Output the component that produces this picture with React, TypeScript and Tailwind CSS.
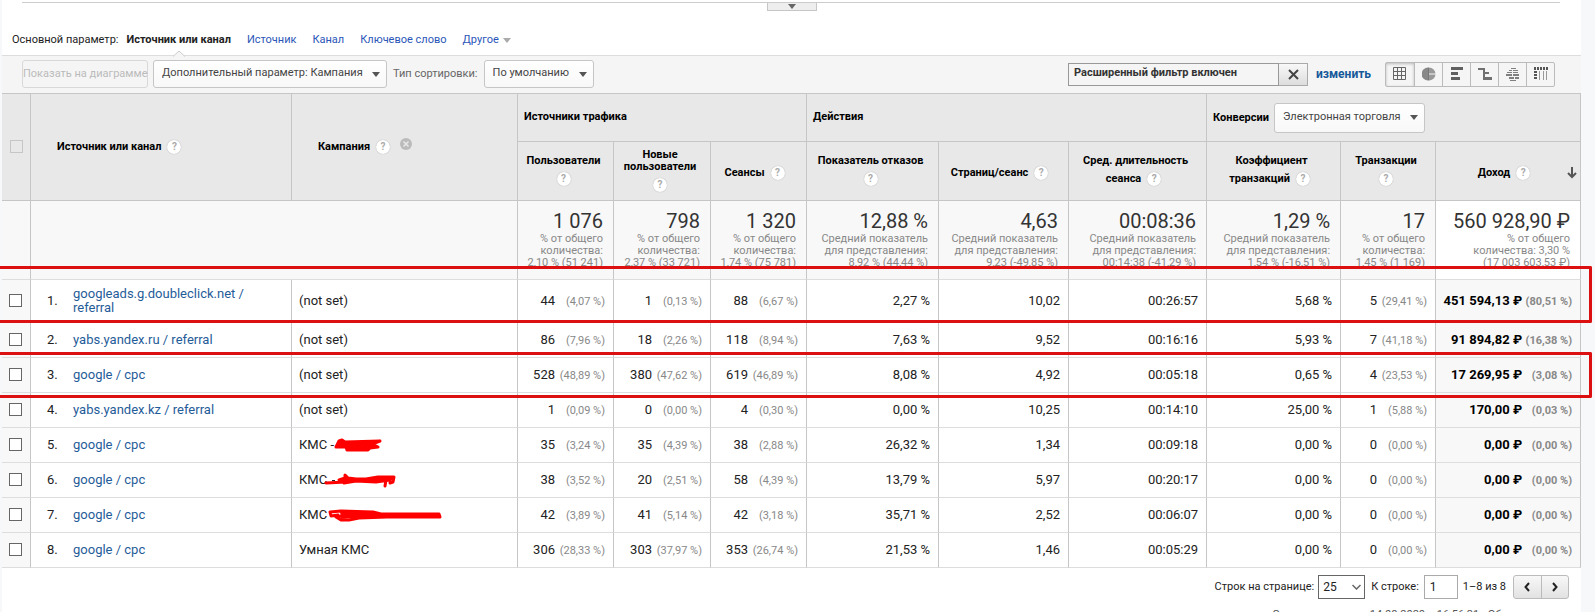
import React from 'react';
import { clsx } from 'clsx';

interface Metric {
  value: string;
  share?: string;
}

interface Row {
  source: string;
  campaign: string;
  scribble?: React.ReactNode;
  metrics: Metric[];
}

interface Column {
  label: string[];
  total: string;
  note: string[];
  helpBelow?: boolean;
}

const columns: Column[] = [
  { label: ['Пользователи'], helpBelow: true, total: '1 076', note: ['% от общего', 'количества:', '2,10 % (51 241)'] },
  { label: ['Новые', 'пользователи'], helpBelow: true, total: '798', note: ['% от общего', 'количества:', '2,37 % (33 721)'] },
  { label: ['Сеансы'], total: '1 320', note: ['% от общего', 'количества:', '1,74 % (75 781)'] },
  { label: ['Показатель отказов'], helpBelow: true, total: '12,88 %', note: ['Средний показатель', 'для представления:', '8,92 % (44,44 %)'] },
  { label: ['Страниц/сеанс'], total: '4,63', note: ['Средний показатель', 'для представления:', '9,23 (-49,85 %)'] },
  { label: ['Сред. длительность', 'сеанса'], total: '00:08:36', note: ['Средний показатель', 'для представления:', '00:14:38 (-41,29 %)'] },
  { label: ['Коэффициент', 'транзакций'], total: '1,29 %', note: ['Средний показатель', 'для представления:', '1,54 % (-16,51 %)'] },
  { label: ['Транзакции'], helpBelow: true, total: '17', note: ['% от общего', 'количества:', '1,45 % (1 169)'] },
  { label: ['Доход'], total: '560 928,90 ₽', note: ['% от общего', 'количества: 3,30 %', '(17 003 603,53 ₽)'] },
];

// "44|4,07" -> value with a share, "2,27 %" -> plain value
const parse = (cells: string[]): Metric[] =>
  cells.map((cell) => {
    const [value, share] = cell.split('|');
    return { value, share };
  });

const rows: Row[] = [
  { source: 'googleads.g.doubleclick.net / referral', campaign: '(not set)', metrics: parse(['44|4,07', '1|0,13', '88|6,67', '2,27 %', '10,02', '00:26:57', '5,68 %', '5|29,41', '451 594,13 ₽|80,51']) },
  { source: 'yabs.yandex.ru / referral', campaign: '(not set)', metrics: parse(['86|7,96', '18|2,26', '118|8,94', '7,63 %', '9,52', '00:16:16', '5,93 %', '7|41,18', '91 894,82 ₽|16,38']) },
  { source: 'google / cpc', campaign: '(not set)', metrics: parse(['528|48,89', '380|47,62', '619|46,89', '8,08 %', '4,92', '00:05:18', '0,65 %', '4|23,53', '17 269,95 ₽|3,08']) },
  { source: 'yabs.yandex.kz / referral', campaign: '(not set)', metrics: parse(['1|0,09', '0|0,00', '4|0,30', '0,00 %', '10,25', '00:14:10', '25,00 %', '1|5,88', '170,00 ₽|0,03']) },
  {
    source: 'google / cpc',
    campaign: 'КМС -',
    scribble: (
      <svg width="48" height="16" viewBox="0 0 48 16" className="shrink-0" aria-hidden="true">
        <path d="M2 11L3 8L5 4L8 3L11 5L42 5L40 8L44 10L36 11L34 13L13 13L12 11z" fill="#ff0000" />
        <path d="M2 10L5 4L8 3L11 5L46 4L38 7L44 10L36 11L34 13L13 13L12 10z" fill="none" stroke="#ff0000" strokeWidth="3" strokeLinecap="round" strokeLinejoin="round" />
      </svg>
    ),
    metrics: parse(['35|3,24', '35|4,39', '38|2,88', '26,32 %', '1,34', '00:09:18', '0,00 %', '0|0,00', '0,00 ₽|0,00']),
  },
  {
    source: 'google / cpc',
    campaign: 'КМС',
    scribble: (
      <svg width="74" height="16" viewBox="0 0 74 16" className="-ml-[3px] shrink-0" aria-hidden="true">
        <path d="M8 8.500h3" stroke="#222" />
        <path d="M15 9L20 6L36 7L54 5L56 8L50 9L32 9L20 12z" fill="#ff0000" />
        <path d="M2 11L22 10M15 8L21 6L21 3L24 6L32 7L42 7L54 5L70 5L69 10L66 11M20 11L32 9L52 10L66 8M62 8L61 14M52 7L68 7M36 9L56 8" fill="none" stroke="#ff0000" strokeWidth="3" strokeLinecap="round" strokeLinejoin="round" />
      </svg>
    ),
    metrics: parse(['38|3,52', '20|2,51', '58|4,39', '13,79 %', '5,97', '00:20:17', '0,00 %', '0|0,00', '0,00 ₽|0,00']),
  },
  {
    source: 'google / cpc',
    campaign: 'КМС',
    scribble: (
      <svg width="116" height="16" viewBox="0 0 116 16" className="shrink-0" aria-hidden="true">
        <path d="M13 4L46 5L56 8L112 7L113 10L30 11L14 12z" fill="#ff0000" />
        <path d="M11 8L4 9L3 5L14 4L46 5L54 7L112 7L113 10L60 10L32 11L22 13L14 13L9 10L22 8" fill="none" stroke="#ff0000" strokeWidth="3" strokeLinecap="round" strokeLinejoin="round" />
      </svg>
    ),
    metrics: parse(['42|3,89', '41|5,14', '42|3,18', '35,71 %', '2,52', '00:06:07', '0,00 %', '0|0,00', '0,00 ₽|0,00']),
  },
  { source: 'google / cpc', campaign: 'Умная КМС', metrics: parse(['306|28,33', '303|37,97', '353|26,74', '21,53 %', '1,46', '00:05:29', '0,00 %', '0|0,00', '0,00 ₽|0,00']) },
];

const viewIcons = [
  {
    name: 'Таблица',
    icon: <path d="M0.500 0.500h12v12h-12zM4.500 0.500v12M8.500 0.500v12M0.500 4.500h12M0.500 8.500h12" fill="none" stroke="#666" />,
  },
  {
    name: 'Проценты',
    icon: (
      <>
        <path d="M6 0.500A6.500 6.500 0 0 0 6 13.500z" fill="#888" />
        <path d="M7 0.500A6.500 6.500 0 0 1 13.500 6.500H7zM7 7.500h6.500A6.500 6.500 0 0 1 7 13.500z" fill="#999" />
        <path d="M6.500 0.500v13" stroke="#777" />
      </>
    ),
  },
  {
    name: 'Эффективность',
    icon: <path d="M1 0h12v3H1zM1 5h7v3H1zM1 10h9v3H1z" fill="#606060" />,
  },
  {
    name: 'Сравнение',
    icon: <path d="M0 1h7v2H0zM5 1h2v12H5zM5 5h6v2H5zM6 10h8v3H6z" fill="#707070" />,
  },
  {
    name: 'Облако терминов',
    icon: <path d="M5 1h5v1H5zM3 3h3v1H3zM7 3h5v1H7zM1 5h5v1H1zM7 5h5v1H7zM0 7h6v2H0zM7 7h6v2H7zM3 10h5v2H3zM9 10h4v2H9zM4 13h6v1H4z" fill="#808080" />,
  },
  {
    name: 'Сводка',
    icon: (
      <>
        <path d="M0 1.500h14" stroke="#555" strokeWidth="3" strokeDasharray="2 1" />
        <path d="M1.500 4v9" stroke="#555" strokeWidth="3" strokeDasharray="2 1" />
        <path d="M5.500 4v9M9.500 4v9M12.500 4v9" stroke="#999" />
      </>
    ),
  },
];

function Arrow({ className }: { className?: string }) {
  return (
    <svg width="8" height="5" viewBox="0 0 8 5" className={clsx('shrink-0', className)} aria-hidden="true">
      <path d="M0 0h8L4 5z" fill="currentColor" />
    </svg>
  );
}

function Help() {
  return (
    <button
      type="button"
      aria-label="Справка"
      className="inline-flex size-[14px] shrink-0 items-center justify-center rounded-full bg-white text-[10px] leading-none font-bold text-[#aaa] shadow-[0_0_1px_#999]"
    >
      ?
    </button>
  );
}

function Dropdown({ label, className }: { label: string; className: string }) {
  return (
    <span className={clsx('relative inline-flex items-center', className)}>
      <select
        aria-label={label}
        className="h-full w-full appearance-none rounded-[3px] border border-[#c6c6c6] bg-linear-to-b from-white to-[#f8f8f8] pb-px pl-2 text-[11px] font-normal text-[#444]"
      >
        <option>{label}</option>
      </select>
      <Arrow className="pointer-events-none absolute right-[7px] text-[#555]" />
    </span>
  );
}

function PrimaryDimension() {
  return (
    <nav className="flex h-[29px] items-center gap-4 pb-px pl-[10px] text-[11px] text-[#222]">
      <span className="flex gap-2">
        Основной параметр:
        <b className="relative font-bold">
          Источник или канал
          <svg width="12" height="7" viewBox="0 0 12 7" className="absolute top-[18px] left-1/2 -ml-[6px]" aria-hidden="true">
            <path d="M0 6.500L6 1l6 5.500" fill="#f5f5f5" stroke="#ccc" />
          </svg>
        </b>
      </span>
      <a href="#source" className="text-[#2a56b8]">Источник</a>
      <a href="#medium" className="text-[#2a56b8]">Канал</a>
      <a href="#keyword" className="text-[#2a56b8]">Ключевое слово</a>
      <a href="#other" className="flex items-center gap-1 text-[#2a56b8]">
        Другое
        <Arrow className="text-[#aaa]" />
      </a>
    </nav>
  );
}

function Toolbar() {
  return (
    <div className="flex h-[38px] items-center border-t border-[#ddd] bg-[#f5f5f5] pr-[26px] pb-px pl-5 text-[11px]">
      <button type="button" disabled className="h-7 w-[126px] rounded-[3px] border border-[#d8d8d8] text-center whitespace-nowrap text-[#bbb]">
        Показать на диаграмме
      </button>
      <Dropdown label="Дополнительный параметр: Кампания" className="ml-[5px] h-7 w-[234px]" />
      <span className="ml-[6px] text-[#666]">Тип сортировки:</span>
      <Dropdown label="По умолчанию" className="ml-[6px] h-7 w-[110px]" />

      <div className="ml-auto flex h-[23px]">
        <input
          type="text"
          aria-label="Фильтр"
          defaultValue="Расширенный фильтр включен"
          className="w-[211px] border border-[#999] bg-[#f5f5f5] px-[5px] pb-[2px] text-[11px] font-bold text-[#333]"
        />
        <button type="button" aria-label="Очистить фильтр" className="flex w-[29px] items-center justify-center border border-l-0 border-[#aaa] bg-linear-to-b from-[#f8f8f8] to-[#ddd]">
          <svg width="11" height="11" viewBox="0 0 11 11" aria-hidden="true">
            <path d="M1 1l9 9M10 1l-9 9" stroke="#444" strokeWidth="2" />
          </svg>
        </button>
      </div>
      <a href="#edit" className="ml-2 text-[12px] font-bold text-[#15599a]">изменить</a>
      <div className="ml-[14px] flex h-[25px] rounded-[2px] border border-[#bbb]">
        {viewIcons.map((view, i) => (
          <button
            key={view.name}
            type="button"
            aria-label={view.name}
            className={clsx(
              'flex w-7 items-center justify-center',
              i > 0 && 'border-l border-[#bbb]',
              i === 0 && 'shadow-[inset_0_1px_3px_#bbb]'
            )}
          >
            <svg width="14" height="14" viewBox="0 0 14 14" aria-hidden="true">{view.icon}</svg>
          </button>
        ))}
      </div>
    </div>
  );
}

function ColumnHead({ column, sorted }: { column: Column; sorted: boolean }) {
  const above = column.helpBelow ? column.label : column.label.slice(0, -1);
  const last = column.helpBelow ? null : column.label[column.label.length - 1];
  return (
    <th scope="col" className="relative h-[59px] border-r border-b border-[#c6c6c6] pt-1 pr-1">
      {above.map((line) => (
        <div key={line} className="whitespace-nowrap">{line}</div>
      ))}
      <div className={clsx('flex h-6 items-center justify-center gap-[6px]', last && 'pr-1')}>
        {last}
        <Help />
      </div>
      {sorted && (
        <svg width="10" height="12" viewBox="0 0 10 12" className="absolute top-[25px] right-[3px]" aria-hidden="true">
          <path d="M5 0v10M1 6l4 4 4-4" fill="none" stroke="#555" strokeWidth="2" />
        </svg>
      )}
    </th>
  );
}

function ReportTable() {
  const border = 'border-r border-b border-[#c6c6c6]';
  return (
    <table className="w-full table-fixed border-separate border-spacing-0 border-t border-[#c6c6c6]">
      <colgroup>
        <col className="w-[29px]" />
        <col className="w-[261px]" />
        <col className="w-[226px]" />
        <col className="w-[96px]" />
        <col className="w-[97px]" />
        <col className="w-[96px]" />
        <col className="w-[132px]" />
        <col className="w-[130px]" />
        <col className="w-[138px]" />
        <col className="w-[134px]" />
        <col className="w-[95px]" />
        <col className="w-[145px]" />
      </colgroup>
      <thead className="bg-[#e8e8e8] text-[11px] leading-[12px] text-black">
        <tr>
          <th rowSpan={2} className={border}>
            <input type="checkbox" aria-label="Выбрать все" className="mb-px ml-2 block size-[13px] appearance-none border border-[#c6c6c6]" />
          </th>
          <th rowSpan={2} scope="col" className={clsx(border, 'pl-[26px]')}>
            <span className="flex items-center gap-[6px]">Источник или канал <Help /></span>
          </th>
          <th rowSpan={2} scope="col" className={clsx(border, 'pl-[26px]')}>
            <span className="flex items-center gap-[6px]">
              Кампания <Help />
              <button type="button" aria-label="Удалить" className="mb-[6px] ml-1">
                <svg width="12" height="12" viewBox="0 0 12 12" aria-hidden="true">
                  <circle cx="6" cy="6" r="6" fill="#bbb" />
                  <path d="M3.500 3.500l5 5M8.500 3.500l-5 5" stroke="#e8e8e8" strokeWidth="1.500" />
                </svg>
              </button>
            </span>
          </th>
          <th colSpan={3} scope="colgroup" className={clsx(border, 'h-12 pb-[2px] pl-[6px] text-left')}>Источники трафика</th>
          <th colSpan={3} scope="colgroup" className={clsx(border, 'pb-[2px] pl-[6px] text-left')}>Действия</th>
          <th colSpan={3} scope="colgroup" className={clsx(border, 'pl-[6px] text-left')}>
            <span className="flex items-center gap-[5px]">
              Конверсии
              <Dropdown label="Электронная торговля" className="h-[30px] w-[151px]" />
            </span>
          </th>
        </tr>
        <tr>
          {columns.map((column, i) => (
            <ColumnHead key={column.total} column={column} sorted={i === columns.length - 1} />
          ))}
        </tr>
      </thead>
      <tbody className="text-[13px] leading-[14px] text-[#222]">
        <tr className="bg-[#f8f8f8] align-top">
          <td className="h-[79px] border-r border-b border-r-[#c6c6c6] border-b-[#ddd]" />
          <td colSpan={2} className="border-r border-b border-r-[#c6c6c6] border-b-[#ddd]" />
          {columns.map((column, i) => (
            <td
              key={column.total}
              className={clsx(
                'border-r border-b border-r-[#c6c6c6] border-b-[#ddd] pt-2 pr-[10px] text-right whitespace-nowrap',
                i === columns.length - 1 && 'bg-white'
              )}
            >
              <div className="text-[20px] leading-[24px] text-[#333]">{column.total}</div>
              <div className="text-[11px] leading-[12px] text-[#888]">
                {column.note.map((line) => <div key={line}>{line}</div>)}
              </div>
            </td>
          ))}
        </tr>
        {rows.map((row, i) => (
          <tr key={i}>
            <td className={clsx('border-r border-b border-r-[#c6c6c6] border-b-[#ddd] bg-[#f8f8f8]', i === 0 ? 'h-[43px]' : 'h-[35px]')}>
              <input type="checkbox" aria-label={row.source} className="mb-[2px] ml-[7px] block size-[13px] appearance-none border border-[#666] bg-white" />
            </td>
            <td className="border-r border-b border-r-[#c6c6c6] border-b-[#ddd] pr-2">
              <div className="flex items-center">
                <span className="w-[42px] shrink-0 pl-4">{i + 1}.</span>
                <a href="#row" className="text-[#1f5c99]">{row.source}</a>
              </div>
            </td>
            <td className="border-r border-b border-r-[#c6c6c6] border-b-[#ddd] pl-[7px]">
              <span className="flex items-center">{row.campaign}{row.scribble}</span>
            </td>
            {row.metrics.map((metric, j) => {
              const revenue = j === row.metrics.length - 1;
              return (
                <td
                  key={j}
                  className={clsx(
                    'border-r border-b border-r-[#c6c6c6] border-b-[#ddd] pr-2 text-right whitespace-nowrap',
                    revenue && 'bg-[#f8f8f8] font-bold text-black'
                  )}
                >
                  {metric.value}
                  {metric.share && (
                    <span className="inline-block w-[50px] text-[11px] text-[#888]">({metric.share} %)</span>
                  )}
                </td>
              );
            })}
          </tr>
        ))}
      </tbody>
    </table>
  );
}

function Pager() {
  return (
    <div className="flex h-[38px] items-center justify-end pr-3 text-[11px] text-[#222]">
      <label htmlFor="page-size">Строк на странице:</label>
      <span className="relative ml-1 flex h-6 w-[47px] items-center">
        <select id="page-size" className="h-full w-full appearance-none border border-[#666] bg-white pl-1 text-[12px]">
          <option>25</option>
        </select>
        <svg width="9" height="6" viewBox="0 0 9 6" className="pointer-events-none absolute right-1" aria-hidden="true">
          <path d="M0.500 1l4 4 4-4" fill="none" stroke="#666" strokeWidth="1.500" />
        </svg>
      </span>
      <label htmlFor="go-to" className="ml-[6px]">К строке:</label>
      <input id="go-to" type="text" defaultValue="1" className="ml-[5px] h-6 w-[34px] border border-[#aaa] pl-[5px] text-[12px]" />
      <span className="ml-[5px]">1–8 из 8</span>
      <div className="ml-[7px] flex h-6 w-14 rounded-[3px] border border-[#bbb] bg-linear-to-b from-[#f8f8f8] to-[#e2e2e2]">
        <button type="button" aria-label="Назад" className="flex flex-1 items-center justify-center">
          <svg width="6" height="10" viewBox="0 0 6 10" aria-hidden="true">
            <path d="M5 1L1.500 5 5 9" fill="none" stroke="#222" strokeWidth="2" />
          </svg>
        </button>
        <button type="button" aria-label="Вперёд" className="flex flex-1 items-center justify-center border-l border-[#bbb]">
          <svg width="6" height="10" viewBox="0 0 6 10" aria-hidden="true">
            <path d="M1 1l3.500 4L1 9" fill="none" stroke="#222" strokeWidth="2" />
          </svg>
        </button>
      </div>
    </div>
  );
}

export default function App() {
  return (
    <div className="min-h-screen bg-[#f7f8fa] pr-[14px] pl-[2px] font-['Roboto',sans-serif]">
      <main className="min-h-screen bg-white">
        <div className="mr-[21px] ml-5 flex h-[26px] items-start justify-center pt-[2px]">
          <div className="flex w-full justify-center border-t border-[#ccc]">
            <button type="button" aria-label="Свернуть график" className="ml-[2px] flex h-2 w-[50px] items-center justify-center border border-t-0 border-[#c6c6c6] bg-[#eee]">
              <Arrow className="text-[#666]" />
            </button>
          </div>
        </div>
        <PrimaryDimension />
        <Toolbar />
        <div className="relative">
          <ReportTable />
          {/* highlighted rows */}
          <div className="pointer-events-none absolute top-[173px] -right-[11px] -left-[2px] h-[57px] rounded-r-[2px] border-[3px] border-l-0 border-[#dc1010]" />
          <div className="pointer-events-none absolute top-[259px] -right-[11px] -left-[2px] h-[46px] rounded-r-[2px] border-[3px] border-l-0 border-[#dc1010]" />
        </div>
        <Pager />
        <p className="pt-px pr-3 text-right text-[11px] text-[#555]">
          Этот отчет создан 14.08.2020 в 16:56:31 - <a href="#refresh">Обновить отчет</a>
        </p>
      </main>
    </div>
  );
}
